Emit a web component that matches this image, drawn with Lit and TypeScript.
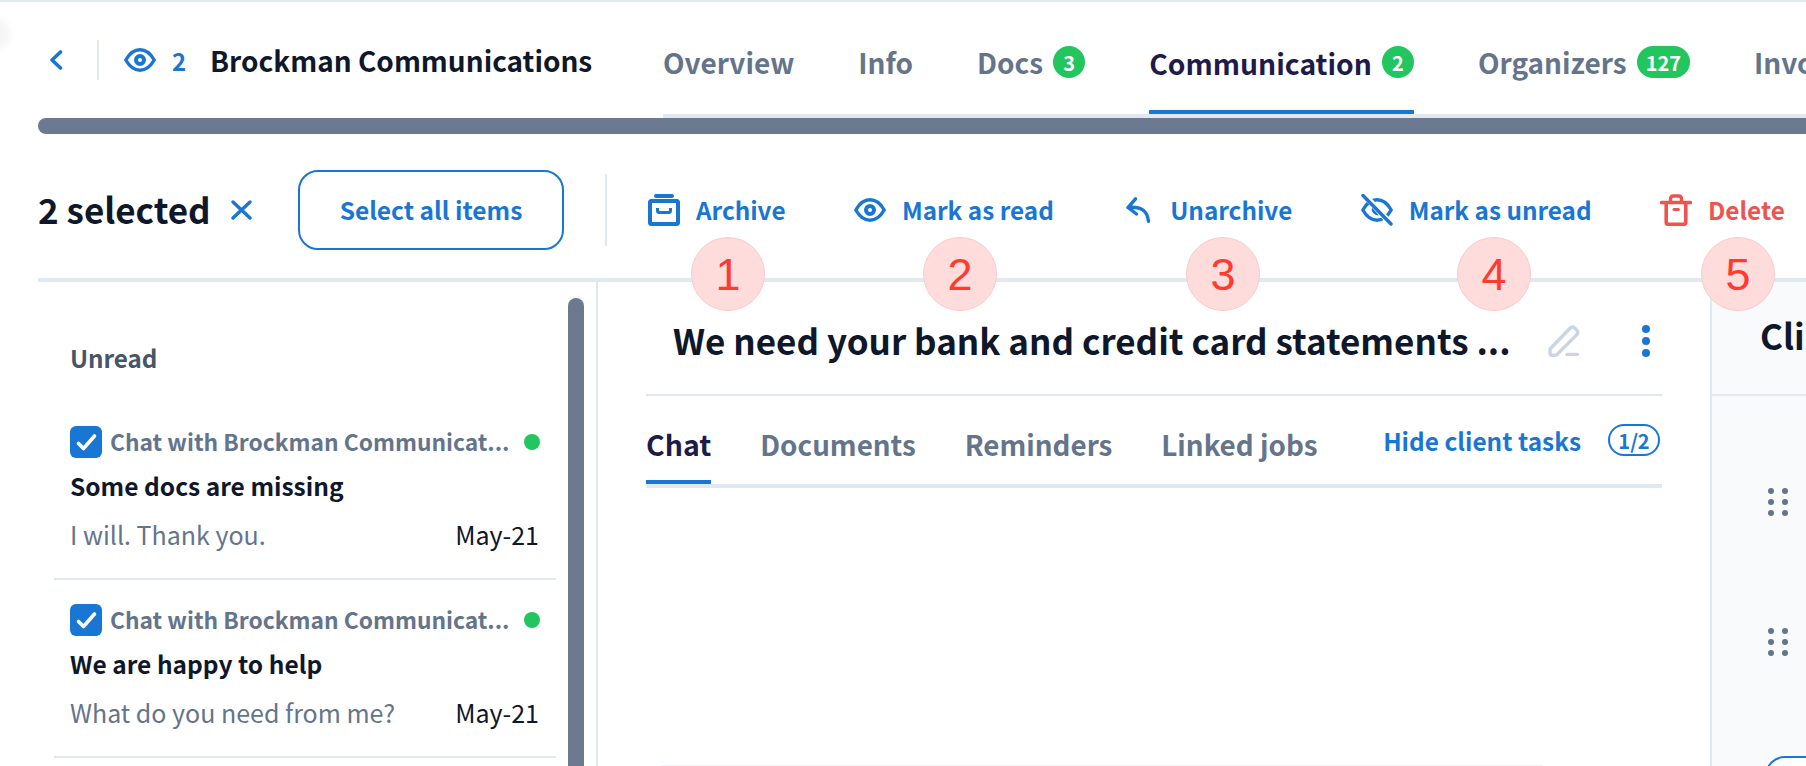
import { LitElement, html, css, svg } from "lit";
import { customElement } from "lit/decorators.js";

const eye = svg`<svg class="ic" width="32" height="24" viewBox="0 0 32 24" fill="none" stroke="currentColor"><path d="M1.800 12C5.800 5 10.400 1.800 16 1.800S26.200 5 30.200 12C26.200 19 21.600 22.200 16 22.200S5.800 19 1.800 12Z" stroke-width="3.400" stroke-linejoin="round"/><circle cx="16" cy="12" r="4" stroke-width="4"/></svg>`;
const archive = svg`<svg class="ic" width="32" height="32" viewBox="0 0 32 32" fill="none" stroke="currentColor"><rect x="6" y="0" width="20" height="4" rx="2" fill="currentColor" stroke="none"/><rect x="2" y="7" width="28" height="23" rx="1.500" stroke-width="4"/><path d="M9.500 14v2.500q0 2 2 2h9q2 0 2-2V14" stroke-width="3"/></svg>`;
const reply = svg`<svg class="ic" width="24" height="26" viewBox="0 0 24 26" fill="none" stroke="currentColor" stroke-width="3.400" stroke-linecap="round" stroke-linejoin="round"><path d="M9.500 1.800 2 10.500 10.500 17M2 10.500C14 9 21.500 13 22.400 24.200"/></svg>`;
const eyeOff = svg`<svg class="ic" width="32" height="32" viewBox="0 0 32 32" fill="none" stroke="currentColor"><path d="M1.800 16C5.800 9 10.400 5.800 16 5.800S26.200 9 30.200 16C26.200 23 21.600 26.200 16 26.200S5.800 23 1.800 16Z" stroke-width="3.400" stroke-linejoin="round"/><path d="M11.500 12.500a6 6 0 0 0 7 8.500z" fill="currentColor" stroke="none"/><path d="M4 1.500 29 29" stroke="#fff" stroke-width="6"/><path d="M2 1.500 30 30" stroke-width="3.400" stroke-linecap="round"/></svg>`;
const trash = svg`<svg class="ic" width="32" height="32" viewBox="0 0 32 32" fill="none" stroke="currentColor" stroke-linecap="round"><path d="M1.500 8.500h29" stroke-width="3.600"/><path d="M10.500 8V5q0-3 3-3h5q3 0 3 3v3" stroke-width="3.400"/><path d="M6.200 9v19q0 2.400 2.400 2.400h14.800q2.400 0 2.400-2.400V9" stroke-width="3.600"/><path d="M14 15.600h4.400" stroke-width="3"/></svg>`;
const chevron = svg`<svg width="14" height="20" viewBox="0 0 14 20" fill="none" stroke="currentColor" stroke-width="3.600" stroke-linecap="round" stroke-linejoin="round"><path d="M11.500 2 3 10l8.500 8"/></svg>`;
const close = svg`<svg width="21" height="20" viewBox="0 0 21 20" fill="none" stroke="currentColor" stroke-width="3.400" stroke-linecap="round"><path d="M2 2l17 16M19 2 2 18"/></svg>`;
const pencil = svg`<svg width="32" height="32" viewBox="0 0 32 32" fill="none" stroke="#cbd5e1" stroke-width="3.400" stroke-linecap="round" stroke-linejoin="round"><path d="M2 24 22 3.200q2.300-2.200 4.600-.2l2.200 2q2 2.200 0 4.600L9 29.500q-1 .8-2.500.8H4q-2 0-2-2z"/><path d="M19 29.400h10.500"/></svg>`;
const check = svg`<svg width="32" height="32" viewBox="0 0 32 32" fill="none" stroke="#fff" stroke-width="3.600" stroke-linecap="round" stroke-linejoin="round"><path d="M8.500 17.500l5 5L24.500 10"/></svg>`;

@customElement("app-root")
export class AppRoot extends LitElement {
  static styles = css`
    :host { display: block; width: 1806px; height: 766px; overflow: hidden; position: relative; background: #fff; color: #0f172a; font-family: "Noto Sans CJK SC", "Noto Sans", sans-serif; font-weight: 600; }
    * { box-sizing: border-box; }
    .topline { height: 2px; background: #e2e8f0; }
    .shade { position: absolute; left: -14px; top: 18px; width: 24px; height: 32px; border-radius: 50%; background: #f6f6f6; filter: blur(3px); }
    .header { display: flex; height: 116px; padding-left: 49px; white-space: nowrap; }
    .back { height: 40px; width: 50px; margin-top: 38px; border-right: 2px solid #e2e8f0; display: flex; align-items: center; color: #1976d2; flex: none; }
    .ident { display: flex; align-items: center; height: 40px; margin-top: 38px; margin-left: 25px; width: 539px; flex: none; }
    .ident .ic { color: #1976d2; flex: none; }
    .num { color: #1976d2; font-size: 24px; width: 54px; padding-left: 16px; flex: none; }
    .name { font-size: 28px; }
    .tabs { flex: 1; display: flex; gap: 64px; border-bottom: 4px solid #e2e8f0; overflow: hidden; }
    .tab { display: flex; flex: none; align-items: center; gap: 10px; height: 112px; padding-top: 8px; font-size: 28px; color: #64748b; position: relative; }
    .tab.active { color: #1e1b4b; font-size: 28.300px; }
    .tab.active::after { content: ""; position: absolute; left: 0; right: 0; bottom: 0; height: 4px; background: #1976d2; }
    .badge { background: #22c55e; color: #fff; font-size: 20px; height: 32px; min-width: 32px; padding: 0 9px; border-radius: 16px; display: flex; align-items: center; justify-content: center; }
    .bar { height: 16px; margin-left: 38px; background: #6b7a90; border-radius: 8px 0 0 8px; }
    .toolbar { display: flex; align-items: center; height: 148px; padding-top: 8px; margin-left: 38px; border-bottom: 4px solid #e2e8f0; white-space: nowrap; }
    .sel { font-size: 35px; width: 193px; flex: none; margin-bottom: 4px; }
    .x { display: flex; color: #1976d2; margin-right: 46px; flex: none; }
    .selall { width: 266px; height: 80px; flex: none; border: 2px solid #1976d2; border-radius: 20px; color: #1976d2; display: flex; align-items: center; justify-content: center; font-size: 24.500px; padding-bottom: 2px; }
    .vr { width: 2px; height: 72px; flex: none; background: #e2e8f0; margin: 0 41px; }
    .acts { display: flex; align-items: center; gap: 68.400px; flex: none; }
    .act { display: flex; align-items: center; gap: 16px; color: #1976d2; font-size: 24.300px; flex: none; }
    .act .box { width: 32px; height: 32px; display: flex; align-items: center; justify-content: center; }
    .act .t { margin-bottom: 2px; }
    .act.del { color: #ef5350; }
    .main { display: flex; height: 484px; margin-left: 38px; }
    .list { width: 560px; flex: none; position: relative; border-right: 2px solid #e2e8f0; padding-left: 16px; }
    .thumb { position: absolute; left: 530px; top: 16px; width: 16px; bottom: 0; border-radius: 8px 8px 0 0; background: #6b7a90; }
    .unread { font-size: 24.200px; color: #475569; padding-left: 16px; height: 144px; padding-top: 58px; line-height: 36px; }
    .item { width: 502px; height: 154px; margin-bottom: 24px; border-bottom: 2px solid #e2e8f0; padding: 0 17px 0 16px; white-space: nowrap; }
    .top { display: flex; align-items: center; height: 32px; }
    .cb { width: 32px; height: 32px; border-radius: 6px; background: #1976d2; flex: none; display: flex; }
    .chat { margin: 0 0 2px 8px; width: 414px; font-size: 22.800px; color: #64748b; overflow: hidden; flex: none; }
    .dot { width: 16px; height: 16px; border-radius: 50%; background: #22c55e; flex: none; }
    .subj { font-size: 24.500px; margin-top: 10px; line-height: 36px; }
    .bot { display: flex; justify-content: space-between; margin-top: 12px; line-height: 36px; font-size: 25px; font-weight: 400; }
    .prev { color: #64748b; }
    .mid { width: 1112px; flex: none; padding: 0 48px; }
    .titlerow { display: flex; align-items: center; height: 114px; padding: 6px 12px 0 27px; border-bottom: 2px solid #e2e8f0; }
    .title { font-size: 35px; flex: 1; min-width: 0; white-space: nowrap; margin-top: -4px; }
    .kebab { display: flex; flex-direction: column; gap: 4px; margin-left: 62px; }
    .kebab i { width: 8px; height: 8px; border-radius: 50%; background: #1976d2; }
    .pen { display: flex; }
    .subtabs { display: flex; height: 92px; gap: 49px; border-bottom: 4px solid #e2e8f0; white-space: nowrap; padding-right: 2px; }
    .st { font-size: 27.800px; color: #64748b; height: 88px; padding-top: 28px; line-height: 40px; position: relative; }
    .st.active { color: #1e1b4b; font-size: 28.500px; }
    .st.active::after { content: ""; position: absolute; left: 0; right: 0; bottom: 0; height: 4px; background: #1976d2; }
    .hide { margin-left: auto; display: flex; align-items: center; gap: 27px; height: 32px; margin-top: 28px; color: #1976d2; font-size: 24.400px; }
    .pill { width: 52px; height: 32px; border: 2px solid #1976d2; border-radius: 16px; font-size: 20px; display: flex; align-items: center; justify-content: center; }
    .footbox { height: 1px; margin: 277px 0 0 15px; width: 881px; background: #eff6fb; }
    .right { flex: 1; background: #f8fafc; border-left: 2px solid #e2e8f0; white-space: nowrap; overflow: hidden; }
    .rhead { height: 114px; border-bottom: 2px solid #e2e8f0; padding: 29px 0 0 48px; font-size: 35px; line-height: 48px; }
    .grip { display: grid; grid-template-columns: 6px 6px; gap: 5px 8px; margin-left: 56px; width: 20px; }
    .grip i { width: 6px; height: 6px; border-radius: 50%; background: #64748b; }
    .g1 { margin-top: 92px; }
    .g2 { margin-top: 112px; }
    .rbtn { margin: 100px 0 0 53px; width: 200px; height: 60px; border: 2px solid #1976d2; border-radius: 20px; background: #fff; }
    .mark { position: absolute; top: 237px; width: 74px; height: 74px; padding-top: 2px; border-radius: 50%; background: #fedcdc; border: 1.500px solid #fbcaca; color: #ff3b30; font-family: "Liberation Sans", Arial, sans-serif; font-weight: 400; font-size: 45px; display: flex; align-items: center; justify-content: center; }
  `;

  private item(subj: string, prev: string) {
    return html`<div class="item">
      <div class="top"><span class="cb">${check}</span><span class="chat">Chat with Brockman Communicat...</span><span class="dot"></span></div>
      <div class="subj">${subj}</div>
      <div class="bot"><span class="prev">${prev}</span><span>May-21</span></div>
    </div>`;
  }

  private grip(cls: string) {
    return html`<div class="grip ${cls}">${[1, 2, 3, 4, 5, 6].map(() => html`<i></i>`)}</div>`;
  }

  render() {
    const marks: [number, number][] = [[1, 691], [2, 923], [3, 1186], [4, 1457], [5, 1701]];
    return html`
      <div class="topline"></div>
      <div class="shade"></div>
      <div class="header">
        <div class="back">${chevron}</div>
        <div class="ident">${eye}<span class="num">2</span><span class="name">Brockman Communications</span></div>
        <div class="tabs">
          <div class="tab">Overview</div>
          <div class="tab">Info</div>
          <div class="tab">Docs<span class="badge">3</span></div>
          <div class="tab active">Communication<span class="badge">2</span></div>
          <div class="tab">Organizers<span class="badge">127</span></div>
          <div class="tab">Invoices</div>
        </div>
      </div>
      <div class="bar"></div>
      <div class="toolbar">
        <span class="sel">2 selected</span>
        <span class="x">${close}</span>
        <div class="selall">Select all items</div>
        <div class="vr"></div>
        <div class="acts">
          <div class="act"><span class="box">${archive}</span><span class="t">Archive</span></div>
          <div class="act"><span class="box">${eye}</span><span class="t">Mark as read</span></div>
          <div class="act"><span class="box">${reply}</span><span class="t">Unarchive</span></div>
          <div class="act"><span class="box">${eyeOff}</span><span class="t">Mark as unread</span></div>
          <div class="act del"><span class="box">${trash}</span><span class="t">Delete</span></div>
        </div>
      </div>
      <div class="main">
        <div class="list">
          <div class="thumb"></div>
          <div class="unread">Unread</div>
          ${this.item("Some docs are missing", "I will. Thank you.")}
          ${this.item("We are happy to help", "What do you need from me?")}
        </div>
        <div class="mid">
          <div class="titlerow">
            <div class="title">We need your bank and credit card statements ...</div>
            <span class="pen">${pencil}</span>
            <div class="kebab"><i></i><i></i><i></i></div>
          </div>
          <div class="subtabs">
            <div class="st active">Chat</div>
            <div class="st">Documents</div>
            <div class="st">Reminders</div>
            <div class="st">Linked jobs</div>
            <div class="hide">Hide client tasks<span class="pill">1/2</span></div>
          </div>
          <div class="footbox"></div>
        </div>
        <div class="right">
          <div class="rhead">Client tasks</div>
          ${this.grip("g1")}
          ${this.grip("g2")}
          <div class="rbtn"></div>
        </div>
      </div>
      ${marks.map(([n, x]) => html`<div class="mark" style="left:${x}px">${n}</div>`)}
    `;
  }
}
